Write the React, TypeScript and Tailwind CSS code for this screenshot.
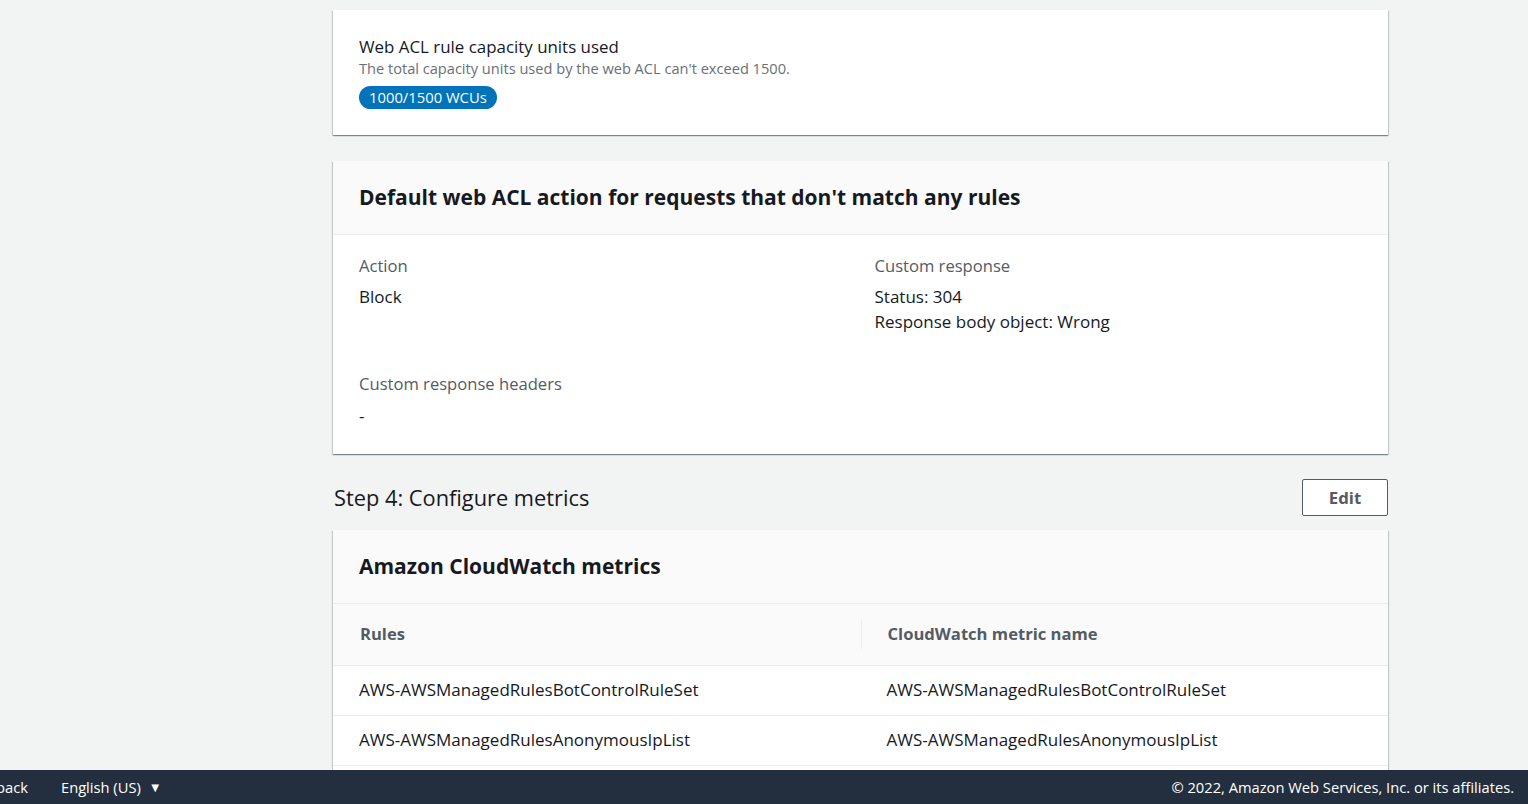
const font = { fontFamily: '"Open Sans", "Noto Sans", Arial, sans-serif' };

const card =
  "bg-white shadow-[0_1px_1px_0_rgba(0,28,36,0.3),1px_1px_1px_0_rgba(0,28,36,0.15),-1px_1px_1px_0_rgba(0,28,36,0.15)]";

const metrics = [
  ["AWS-AWSManagedRulesBotControlRuleSet", "AWS-AWSManagedRulesBotControlRuleSet"],
  ["AWS-AWSManagedRulesAnonymousIpList", "AWS-AWSManagedRulesAnonymousIpList"],
  ["AWS-AWSManagedRulesAmazonIpReputationList", "AWS-AWSManagedRulesAmazonIpReputationList"],
];

export default function App() {
  return (
    <div
      className="h-screen w-full flex flex-col bg-[#f2f3f3] text-[#16191f] overflow-hidden"
      style={font}
    >
      <div className="flex-1 overflow-hidden">
        <div className="ml-[333px] w-[1055px] pt-[10px] flex flex-col">
          {/* Capacity */}
          <div className={`${card} px-[26px] pt-[26px] pb-[26px]`}>
            <div className="text-[16.9px] leading-[22px]">Web ACL rule capacity units used</div>
            <div className="text-[14.6px] leading-[20px] text-[#687078]">
              The total capacity units used by the web ACL can't exceed 1500.
            </div>
            <div className="mt-[7px]">
              <span className="inline-block bg-[#0073bb] text-white text-[14.8px] leading-[23px] px-[10px] rounded-full">
                1000/1500 WCUs
              </span>
            </div>
          </div>

          {/* Default action */}
          <div className={`${card} mt-[26px]`}>
            <div className="bg-[#fafafa] border-b border-[#eaeded] px-[26px] py-[24px]">
              <h2 className="text-[21px] leading-[25px] font-bold">
                Default web ACL action for requests that don't match any rules
              </h2>
            </div>
            <div className="px-[26px] pt-[20px] pb-[27px] grid grid-cols-2 gap-x-[28px] gap-y-[40px]">
              <div>
                <div className="text-[16.6px] leading-[22px] text-[#545b64]">Action</div>
                <div className="mt-[9px] text-[17px] leading-[22px]">Block</div>
              </div>
              <div>
                <div className="text-[16.6px] leading-[22px] text-[#545b64]">Custom response</div>
                <div className="mt-[9px] flex flex-col gap-[3px] text-[17px] leading-[22px]">
                  <span>Status: 304</span>
                  <span>Response body object: Wrong</span>
                </div>
              </div>
              <div>
                <div className="text-[16.6px] leading-[22px] text-[#545b64]">Custom response headers</div>
                <div className="mt-[10px] text-[17px] leading-[22px]">-</div>
              </div>
            </div>
          </div>

          {/* Step 4 */}
          <div className="mt-[25px] flex items-center justify-between">
            <h2 className="text-[21.8px] leading-[30px] pl-px">Step 4: Configure metrics</h2>
            <button className="h-[37px] w-[86px] border border-[#545b64] rounded-[2px] bg-white text-[#545b64] font-bold text-[16.8px]">
              Edit
            </button>
          </div>

          <div className={`${card} mt-[14px]`}>
            <div className="bg-[#fafafa] border-b border-[#eaeded] px-[26px] py-[24px]">
              <h2 className="text-[21px] leading-[25px] font-bold">Amazon CloudWatch metrics</h2>
            </div>
            <table className="w-full table-fixed border-collapse">
              <thead>
                <tr className="bg-[#fafafa] border-b border-[#eaeded]">
                  <th className="h-[61px] text-left font-bold text-[16.6px] text-[#545b64] pl-[27px]">
                    Rules
                  </th>
                  <th className="h-[61px] text-left font-bold text-[16.6px] text-[#545b64] p-0">
                    <div className="flex items-center">
                      <span className="w-px h-[30px] bg-[#eaeded]" />
                      <span className="pl-[26px]">CloudWatch metric name</span>
                    </div>
                  </th>
                </tr>
              </thead>
              <tbody>
                {metrics.map(([rule, name]) => (
                  <tr key={rule} className="border-b border-[#eaeded]">
                    <td className="h-[50px] pl-[26px] text-[17px]">{rule}</td>
                    <td className="h-[50px] pl-[26px] text-[17px]">{name}</td>
                  </tr>
                ))}
              </tbody>
            </table>
          </div>
        </div>
      </div>

      {/* Footer */}
      <footer className="h-[34px] shrink-0 bg-[#232f3e] text-white text-[14.7px] flex items-center pt-px">
        <span className="-ml-[37px] whitespace-nowrap">Feedback</span>
        <span className="ml-[33px] flex items-center gap-[8px] whitespace-nowrap">
          English (US)
          <span className="text-[13px]">▼</span>
        </span>
        <span className="ml-auto mr-[14px] whitespace-nowrap">
          © 2022, Amazon Web Services, Inc. or its affiliates.
        </span>
      </footer>
    </div>
  );
}
